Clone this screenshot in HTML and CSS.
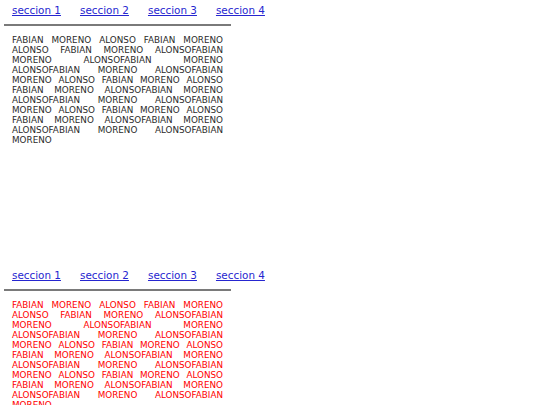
FILE: index.html
```html
<!DOCTYPE html>
<html>
<head>
<meta charset="utf-8">
<link rel="stylesheet" href="styles.css">
</head>
<body>
<div class="section">
  <nav class="nav">
    <a href="#s1">seccion 1</a>
    <a href="#s2">seccion 2</a>
    <a href="#s3">seccion 3</a>
    <a href="#s4">seccion 4</a>
  </nav>
  <hr class="rule">
  <p class="text">FABIAN MORENO ALONSO FABIAN MORENO ALONSO FABIAN MORENO ALONSOFABIAN MORENO ALONSOFABIAN MORENO ALONSOFABIAN MORENO ALONSOFABIAN MORENO ALONSO FABIAN MORENO ALONSO FABIAN MORENO ALONSOFABIAN MORENO ALONSOFABIAN MORENO ALONSOFABIAN MORENO ALONSO FABIAN MORENO ALONSO FABIAN MORENO ALONSOFABIAN MORENO ALONSOFABIAN MORENO ALONSOFABIAN MORENO</p>
</div>
<div class="section">
  <nav class="nav">
    <a href="#s1">seccion 1</a>
    <a href="#s2">seccion 2</a>
    <a href="#s3">seccion 3</a>
    <a href="#s4">seccion 4</a>
  </nav>
  <hr class="rule">
  <p class="text red">FABIAN MORENO ALONSO FABIAN MORENO ALONSO FABIAN MORENO ALONSOFABIAN MORENO ALONSOFABIAN MORENO ALONSOFABIAN MORENO ALONSOFABIAN MORENO ALONSO FABIAN MORENO ALONSO FABIAN MORENO ALONSOFABIAN MORENO ALONSOFABIAN MORENO ALONSOFABIAN MORENO ALONSO FABIAN MORENO ALONSO FABIAN MORENO ALONSOFABIAN MORENO ALONSOFABIAN MORENO ALONSOFABIAN MORENO</p>
</div>
</body>
</html>
```
FILE: styles.css
```css
html, body {
  margin: 0;
  padding: 0;
  background: #fff;
}
body {
  font-family: "DejaVu Sans", Verdana, sans-serif;
}
.section {
  width: 227px;
  height: 265px;
  margin-left: 4px;
  padding-top: 4px;
  box-sizing: border-box;
}
.nav {
  display: flex;
  gap: 19px;
  padding-left: 8px;
  font-size: 10.4px;
  line-height: 13px;
  white-space: nowrap;
}
.nav a {
  color: #2626d0;
  text-decoration: underline;
}
.rule {
  margin: 7px 0 0 0;
  height: 0;
  border: 0;
  border-top: 2px solid #7a7a7a;
}
.text {
  margin: 9px 0 0 0;
  padding: 0 8px;
  font-size: 8.8px;
  line-height: 10px;
  text-align: justify;
  color: #2b2b2b;
}
.red {
  color: #f00;
}
```
